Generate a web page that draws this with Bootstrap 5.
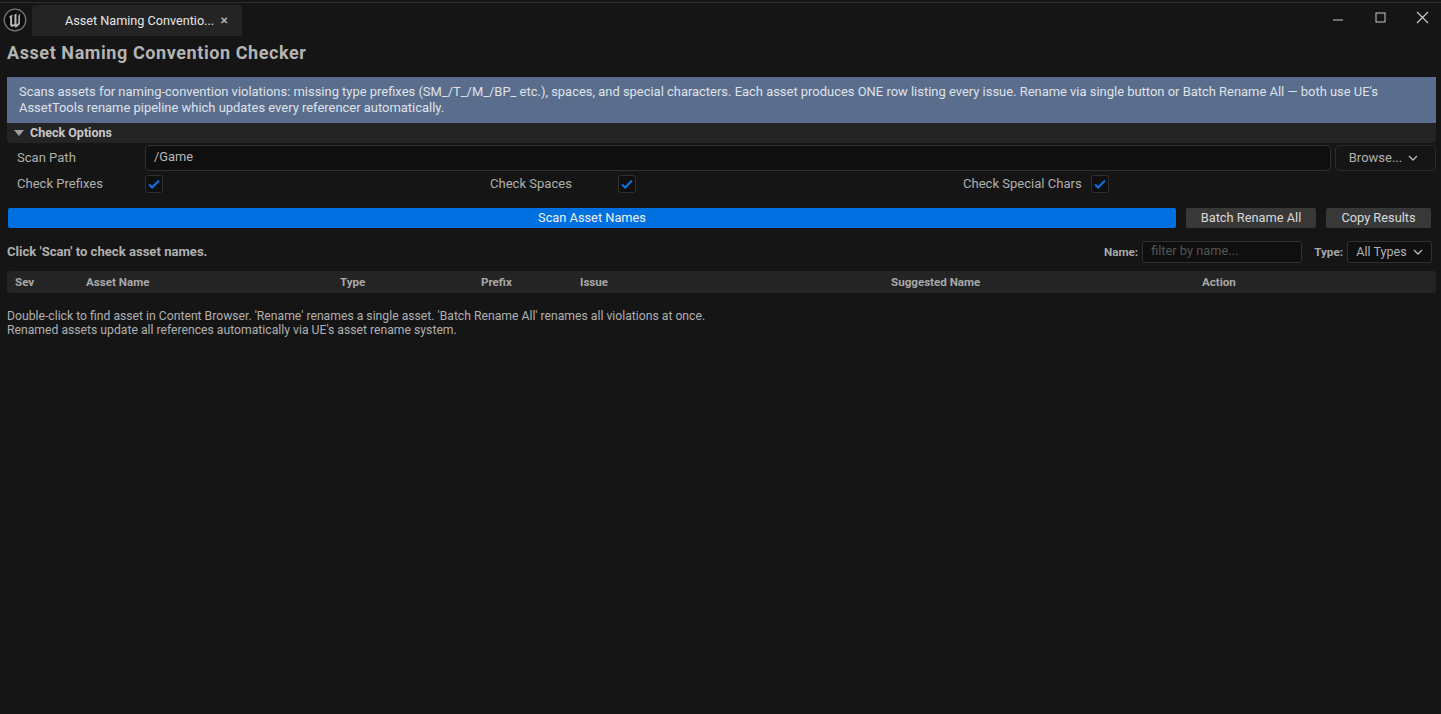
<!DOCTYPE html>
<html lang="en">
<head>
  <meta charset="UTF-8">
  <title>Asset Naming Convention Checker</title>
  <link href="https://cdn.jsdelivr.net/npm/bootstrap@5.3.3/dist/css/bootstrap.min.css" rel="stylesheet">
  <style>
    html, body { height: 100%; }
    body { background: #151515; color: #c0c0c0; font-family: Roboto, "Liberation Sans", sans-serif; font-size: 12.2px; line-height: 14px; overflow: hidden; }
    .title-bar { height: 36px; margin-top: 2px; border-top: 1px solid #2f2f2f; padding-top: 2px; }
    .ue-logo { width: 24px; height: 24px; margin: 3px 5px 0 3px; }
    .app-tab { width: 210px; height: 31px; background: #242424; color: #e6e6e6; border-radius: 3px 3px 0 0; padding-left: 33px; font-size: 12.65px; }
    .tab-x { margin-left: 6px; color: #b5b5b5; font-size: 10px; font-weight: 700; }
    .win-btns { padding: 5px 11px 0 0; gap: 27px; }
    .page-title { font-size: 18px; line-height: 22px; font-weight: 700; color: #b4b4b4; margin: 4px 0 13px; padding-left: 7px; letter-spacing: .58px; }
    .content { padding: 0 5px 0 7px; }
    .info-box { background: #5a6d8d; color: #dfe3ea; height: 46px; padding: 7px 12px 0; font-size: 12.95px; line-height: 16px; }
    .opt-head { height: 20px; background: #242424; border-radius: 0 0 4px 4px; color: #c8c8c8; font-weight: 700; padding-left: 7px; gap: 6px; font-size: 12.5px; }
    .tri { width: 0; height: 0; border-left: 5.5px solid transparent; border-right: 5.5px solid transparent; border-top: 6px solid #a0a0a0; }
    .path-row { height: 26px; margin-top: 2px; padding-left: 10px; }
    .opt-label { width: 128px; color: #b0b0b0; font-size: 13.05px; }
    .path-input { height: 26px; flex: 1; background: #0f0f0f; border: 1px solid #303030; border-radius: 4px; color: #b8b8b8; padding: 0 8px 3px; font-size: 12.8px; }
    .browse { width: 101px; height: 26px; margin-left: 4px; border: 1px solid #2c2c2c; border-radius: 4px; background: #151515; color: #b0b0b0; font-size: 13px; gap: 6px; padding-right: 4px; }
    .check-row { margin-top: 3px; height: 20px; padding-left: 10px; }
    .check-cell { width: 473px; }
    .check-box { width: 18px; height: 18px; background: #0f0f0f; border: 1px solid #303030; border-radius: 3px; }
    .action-row { margin-top: 14px; height: 20px; gap: 10px; padding: 0 5px 0 1px; }
    .app-btn { height: 20px; background: #383838; color: #dadada; border-radius: 2px; font-size: 12.8px; }
    .app-btn.scan { flex: 1; background: #0070e0; color: #f0f0f0; }
    .wide-btn { width: 130px; }
    .copy-btn { width: 105px; }
    .status-row { margin-top: 13px; height: 22px; padding-right: 4px; }
    .status-row b { font-size: 13.1px; color: #b0b0b0; }
    .filter-label { font-weight: 700; color: #a8a8a8; font-size: 11.7px; margin-right: 4px; }
    .filter-input { width: 160px; height: 22px; background: #0f0f0f; border: 1px solid #303030; border-radius: 3px; color: #555; padding: 0 8px 3px; font-size: 12.8px; margin-right: 12px; }
    .filter-select { width: 85px; height: 22px; background: #0f0f0f; border: 1px solid #303030; border-radius: 3px; color: #b0b0b0; font-size: 12.6px; gap: 6px; }
    .table-head { margin-top: 8px; height: 22px; background: #242424; border-radius: 3px; color: #a8a8a8; font-weight: 700; font-size: 11.6px; }
    .table-head span { display: block; }
    .th-sev { width: 79px; padding-left: 8px; }
    .th-name { width: 254px; }
    .th-type { width: 141px; }
    .th-prefix { width: 99px; }
    .th-wide { width: 311px; }
    .foot-note { margin-top: 16px; color: #b0b0b0; line-height: 14px; }
  </style>
</head>
<body>

<div class="title-bar d-flex align-items-start">
  <svg class="ue-logo" viewBox="0 0 24 24">
    <circle cx="12" cy="12" r="10.8" fill="#0c0c0c" stroke="#777" stroke-width="1.3"/>
    <path d="M5.5 9.5C6.5 8 8 7 10 6.5c-.6.6-.9 1.2-.9 2v7c0 1.2 1.2 1.3 2.3.5V8.3c0-.6-.1-1-.4-1.4l2.9-1.6c-.3.5-.4 1-.4 1.5v9.6c.7-.4 1.3-1 1.8-1.5V8.2c0-.9.6-1.7 2.3-2.2-.5.7-.7 1.4-.7 2.2v7.9c-1 1.4-2.6 2.8-4.2 3.6l-1.4-1.6c-1.8 1.2-4.2.6-4.2-1.7V9.4c-.6-.3-1.2-.2-1.9.1z" fill="#b5b5b5"/>
  </svg>
  <div class="app-tab d-flex align-items-center">Asset Naming Conventio...<span class="tab-x">✕</span></div>
  <div class="win-btns d-flex ms-auto">
    <svg width="15" height="15" viewBox="0 0 15 15"><path d="M2 10h10" stroke="#c8c8c8" stroke-width="1"/></svg>
    <svg width="15" height="15" viewBox="0 0 15 15"><rect x="3" y="3" width="9" height="9" fill="none" stroke="#c8c8c8" stroke-width="1"/></svg>
    <svg width="15" height="15" viewBox="0 0 15 15"><path d="M2 2l11 11M13 2L2 13" stroke="#c8c8c8" stroke-width="1.2"/></svg>
  </div>
</div>

<h1 class="page-title">Asset Naming Convention Checker</h1>

<div class="content">
  <div class="info-box">Scans assets for naming-convention violations: missing type prefixes (SM_/T_/M_/BP_ etc.), spaces, and special characters. Each asset produces ONE row listing every issue. Rename via single button or Batch Rename All — both use UE's AssetTools rename pipeline which updates every referencer automatically.</div>

  <div class="opt-head d-flex align-items-center"><span class="tri"></span>Check Options</div>

  <div class="path-row d-flex align-items-center">
    <span class="opt-label">Scan Path</span>
    <div class="path-input d-flex align-items-center">/Game</div>
    <div class="browse d-flex align-items-center justify-content-center">Browse...
      <svg width="10" height="6" viewBox="0 0 10 6"><path d="M1 1l4 4 4-4" fill="none" stroke="#b8b8b8" stroke-width="1.3"/></svg>
    </div>
  </div>

  <div class="check-row d-flex align-items-center">
    <div class="check-cell d-flex align-items-center">
      <span class="opt-label">Check Prefixes</span>
      <span class="check-box d-flex align-items-center justify-content-center"><svg width="12" height="10" viewBox="0 0 12 10"><path d="M1 5.5l3.2 3L11 1.5" fill="none" stroke="#0a74e6" stroke-width="2"/></svg></span>
    </div>
    <div class="check-cell d-flex align-items-center">
      <span class="opt-label">Check Spaces</span>
      <span class="check-box d-flex align-items-center justify-content-center"><svg width="12" height="10" viewBox="0 0 12 10"><path d="M1 5.5l3.2 3L11 1.5" fill="none" stroke="#0a74e6" stroke-width="2"/></svg></span>
    </div>
    <div class="check-cell d-flex align-items-center">
      <span class="opt-label">Check Special Chars</span>
      <span class="check-box d-flex align-items-center justify-content-center"><svg width="12" height="10" viewBox="0 0 12 10"><path d="M1 5.5l3.2 3L11 1.5" fill="none" stroke="#0a74e6" stroke-width="2"/></svg></span>
    </div>
  </div>

  <div class="action-row d-flex">
    <div class="app-btn scan d-flex align-items-center justify-content-center">Scan Asset Names</div>
    <div class="app-btn wide-btn d-flex align-items-center justify-content-center">Batch Rename All</div>
    <div class="app-btn copy-btn d-flex align-items-center justify-content-center">Copy Results</div>
  </div>

  <div class="status-row d-flex align-items-center">
    <b>Click 'Scan' to check asset names.</b>
    <span class="filter-label ms-auto">Name:</span>
    <div class="filter-input d-flex align-items-center">filter by name...</div>
    <span class="filter-label">Type:</span>
    <div class="filter-select d-flex align-items-center justify-content-center">All Types
      <svg width="10" height="6" viewBox="0 0 10 6"><path d="M1 1l4 4 4-4" fill="none" stroke="#b8b8b8" stroke-width="1.3"/></svg>
    </div>
  </div>

  <div class="table-head d-flex align-items-center">
    <span class="th-sev">Sev</span>
    <span class="th-name">Asset Name</span>
    <span class="th-type">Type</span>
    <span class="th-prefix">Prefix</span>
    <span class="th-wide">Issue</span>
    <span class="th-wide">Suggested Name</span>
    <span>Action</span>
  </div>

  <div class="foot-note">Double-click to find asset in Content Browser. 'Rename' renames a single asset. 'Batch Rename All' renames all violations at once.<br>Renamed assets update all references automatically via UE's asset rename system.</div>
</div>

<script src="https://cdn.jsdelivr.net/npm/bootstrap@5.3.3/dist/js/bootstrap.bundle.min.js"></script>
</body>
</html>
